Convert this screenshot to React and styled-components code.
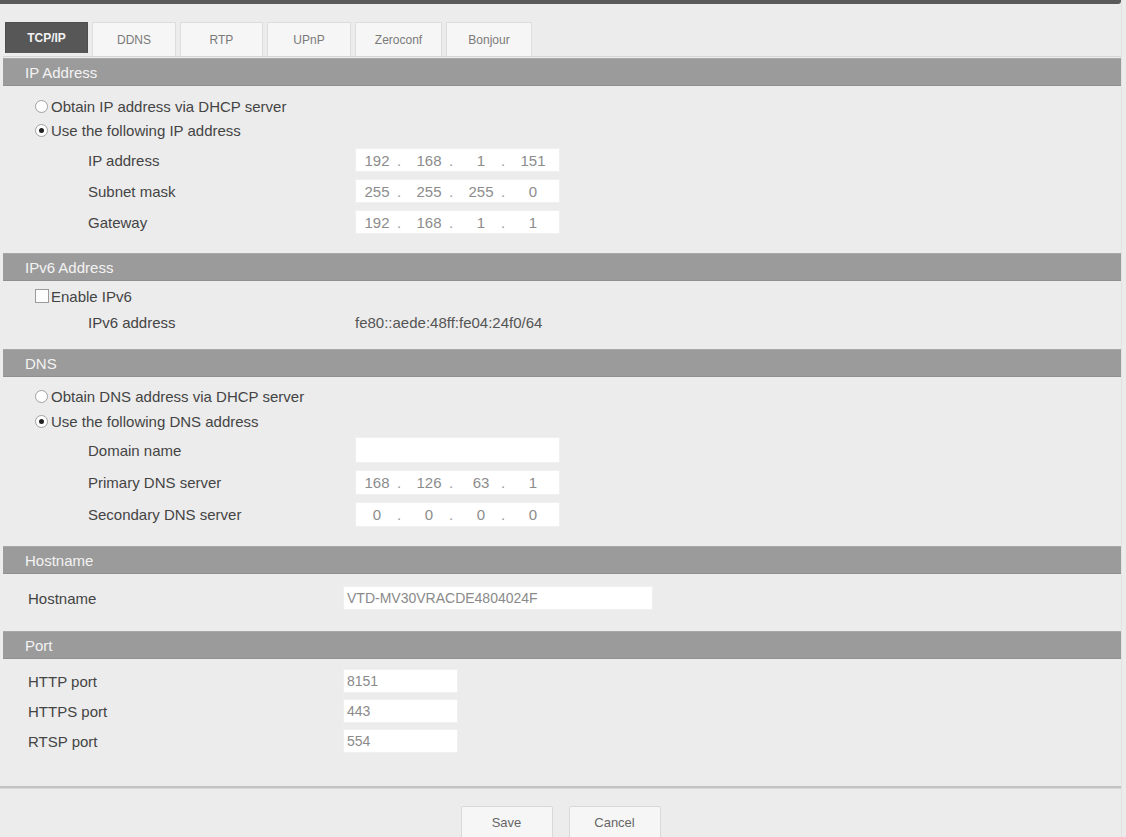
import React from "react";
import styled, { createGlobalStyle } from "styled-components";

const GlobalStyle = createGlobalStyle`
  html, body { margin: 0; padding: 0; background: #ececec; }
  body { font-family: "Liberation Sans", Arial, sans-serif; color: #444; }
  * { box-sizing: border-box; }
`;

const Page = styled.div`
  width: 1122px;
  min-height: 837px;
  border-right: 1px solid #e2e2e2;
  background: #ececec;
`;

const TopBar = styled.div`
  height: 4px;
  background: #5a5a5a;
  border-bottom-right-radius: 3px;
`;

const Content = styled.div`
  padding-left: 3px;
`;

const TabRow = styled.div`
  display: flex;
  align-items: flex-start;
  gap: 4px;
  margin-top: 18px;
  height: 35px;
  padding-left: 2px;
  border-bottom: 1px solid #d6d6d6;
`;

const Tab = styled.div`
  height: ${(p) => (p.$active ? "31px" : "34px")};
  min-width: ${(p) => p.$w}px;
  padding: 0 10px;
  display: flex;
  align-items: center;
  justify-content: center;
  font-size: 12px;
  font-weight: ${(p) => (p.$active ? "bold" : "normal")};
  color: ${(p) => (p.$active ? "#f2f2f2" : "#7a7a7a")};
  background: ${(p) => (p.$active ? "#575757" : "#f6f6f6")};
  border: 1px solid ${(p) => (p.$active ? "#4e4e4e" : "#dddddd")};
  border-bottom: none;
`;

const Header = styled.div`
  margin-top: ${(p) => p.$mt || 0}px;
  height: 28px;
  background: #9b9b9b;
  border-top: 1px solid #a8a8a8;
  border-bottom: 1px solid #909090;
  color: #f3f3f3;
  font-size: 15px;
  display: flex;
  align-items: center;
  padding-left: 22px;
`;

const Body = styled.div`
  display: flex;
  flex-direction: column;
  padding: ${(p) => p.$pt}px 0 ${(p) => p.$pb}px ${(p) => p.$pl}px;
`;

const OptionRow = styled.div`
  height: 24px;
  margin-top: ${(p) => p.$mt || 0}px;
  display: flex;
  align-items: center;
  font-size: 15px;
  color: #444;
`;

const Radio = styled.span`
  width: 13px;
  height: 13px;
  border-radius: 50%;
  border: 1px solid #a0a0a0;
  background: #fff;
  margin-right: 3px;
  display: inline-flex;
  align-items: center;
  justify-content: center;
  &::after {
    content: "";
    width: 5px;
    height: 5px;
    border-radius: 50%;
    background: ${(p) => (p.$checked ? "#222" : "transparent")};
  }
`;

const Checkbox = styled.span`
  width: 14px;
  height: 14px;
  border: 1px solid #9a9a9a;
  background: #fdfdfd;
  margin-right: 2px;
`;

const Fields = styled.div`
  display: flex;
  flex-direction: column;
  gap: ${(p) => p.$gap}px;
  margin-top: ${(p) => p.$mt || 0}px;
  margin-left: ${(p) => p.$ml || 0}px;
`;

const FieldRow = styled.div`
  display: flex;
  align-items: center;
  height: ${(p) => p.$h || 24}px;
  font-size: 15px;
`;

const Label = styled.div`
  width: ${(p) => p.$w}px;
  color: #444;
  flex-shrink: 0;
`;

const Value = styled.div`
  color: #555;
  font-size: 15px;
`;

const TextBox = styled.div`
  width: ${(p) => p.$w}px;
  height: 100%;
  background: #fff;
  border: 1px solid #f0f0f0;
  display: flex;
  align-items: center;
  padding-left: 3px;
  color: #8a8a8a;
  font-size: 14px;
`;

const IpBox = styled.div`
  width: 205px;
  height: 100%;
  background: #fff;
  border: 1px solid #f0f0f0;
  display: flex;
  align-items: center;
  padding-left: 1px;
  color: #8c8c8c;
  font-size: 15px;
`;

const Octet = styled.span`
  width: 40px;
  text-align: center;
`;

const Dot = styled.span`
  width: 12px;
  text-align: left;
  color: #999;
`;

const Separator = styled.div`
  height: 3px;
  background: #c3c3c3;
  border-bottom: 1px solid #d8d8d8;
`;

const ButtonBar = styled.div`
  display: flex;
  justify-content: center;
  gap: 16px;
  margin-top: 17px;
`;

const Button = styled.button`
  width: 92px;
  height: 33px;
  background: #f6f6f6;
  border: 1px solid #d9d9d9;
  border-radius: 2px;
  font-family: "Liberation Sans", Arial, sans-serif;
  font-size: 13px;
  color: #666;
`;

const Ip = ({ parts }) => (
  <IpBox>
    {parts.map((p, i) => (
      <React.Fragment key={i}>
        <Octet>{p}</Octet>
        {i < 3 && <Dot>.</Dot>}
      </React.Fragment>
    ))}
  </IpBox>
);

const tabs = [
  ["TCP/IP", 83],
  ["DDNS", 84],
  ["RTP", 83],
  ["UPnP", 84],
  ["Zeroconf", 87],
  ["Bonjour", 86],
];

export default function App() {
  return (
    <>
      <GlobalStyle />
      <Page>
        <TopBar />
        <Content>
          <TabRow>
            {tabs.map(([t, w], i) => (
              <Tab key={t} $w={w} $active={i === 0}>
                {t}
              </Tab>
            ))}
          </TabRow>

          <Header $mt={1}>IP Address</Header>
          <Body $pt={8} $pb={19} $pl={32}>
            <OptionRow>
              <Radio />
              Obtain IP address via DHCP server
            </OptionRow>
            <OptionRow>
              <Radio $checked />
              Use the following IP address
            </OptionRow>
            <Fields $gap={7} $mt={6} $ml={53}>
              <FieldRow>
                <Label $w={267}>IP address</Label>
                <Ip parts={["192", "168", "1", "151"]} />
              </FieldRow>
              <FieldRow>
                <Label $w={267}>Subnet mask</Label>
                <Ip parts={["255", "255", "255", "0"]} />
              </FieldRow>
              <FieldRow>
                <Label $w={267}>Gateway</Label>
                <Ip parts={["192", "168", "1", "1"]} />
              </FieldRow>
            </Fields>
          </Body>

          <Header>IPv6 Address</Header>
          <Body $pt={3} $pb={15} $pl={32}>
            <OptionRow>
              <Checkbox />
              Enable IPv6
            </OptionRow>
            <Fields $gap={0} $mt={2} $ml={53}>
              <FieldRow>
                <Label $w={267}>IPv6 address</Label>
                <Value>fe80::aede:48ff:fe04:24f0/64</Value>
              </FieldRow>
            </Fields>
          </Body>

          <Header>DNS</Header>
          <Body $pt={7} $pb={19} $pl={32}>
            <OptionRow>
              <Radio />
              Obtain DNS address via DHCP server
            </OptionRow>
            <OptionRow $mt={1}>
              <Radio $checked />
              Use the following DNS address
            </OptionRow>
            <Fields $gap={7} $mt={4} $ml={53}>
              <FieldRow $h={26}>
                <Label $w={267}>Domain name</Label>
                <TextBox $w={205} />
              </FieldRow>
              <FieldRow $h={25}>
                <Label $w={267}>Primary DNS server</Label>
                <Ip parts={["168", "126", "63", "1"]} />
              </FieldRow>
              <FieldRow $h={25}>
                <Label $w={267}>Secondary DNS server</Label>
                <Ip parts={["0", "0", "0", "0"]} />
              </FieldRow>
            </Fields>
          </Body>

          <Header>Hostname</Header>
          <Body $pt={12} $pb={21} $pl={25}>
            <Fields $gap={0}>
              <FieldRow>
                <Label $w={315}>Hostname</Label>
                <TextBox $w={310}>VTD-MV30VRACDE4804024F</TextBox>
              </FieldRow>
            </Fields>
          </Body>

          <Header>Port</Header>
          <Body $pt={10} $pb={33} $pl={25}>
            <Fields $gap={6}>
              <FieldRow>
                <Label $w={315}>HTTP port</Label>
                <TextBox $w={115}>8151</TextBox>
              </FieldRow>
              <FieldRow>
                <Label $w={315}>HTTPS port</Label>
                <TextBox $w={115}>443</TextBox>
              </FieldRow>
              <FieldRow>
                <Label $w={315}>RTSP port</Label>
                <TextBox $w={115}>554</TextBox>
              </FieldRow>
            </Fields>
          </Body>
        </Content>

        <Separator />
        <ButtonBar>
          <Button>Save</Button>
          <Button>Cancel</Button>
        </ButtonBar>
      </Page>
    </>
  );
}
